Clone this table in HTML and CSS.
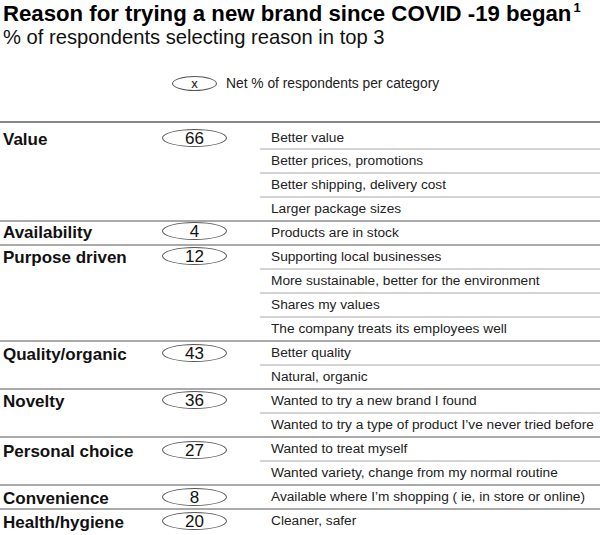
FILE: index.html
```html
<!DOCTYPE html>
<html>
<head>
<meta charset="utf-8">
<link rel="stylesheet" href="styles.css">
</head>
<body>
<div class="page">
  <h1 class="title">Reason for trying a new brand since COVID -19 began<sup>1</sup></h1>
  <div class="subtitle">% of respondents selecting reason in top 3</div>
  <div class="legend">
    <span class="oval oval-small">x</span>
    <span class="legend-text">Net % of respondents per category</span>
  </div>
  <div class="table">
    <div class="cat first">
      <div class="head off6"><div class="label">Value</div><div class="num"><span class="oval">66</span></div></div>
      <div class="items tall-first">
        <div class="item">Better value</div>
        <div class="item">Better prices, promotions</div>
        <div class="item">Better shipping, delivery cost</div>
        <div class="item">Larger package sizes</div>
      </div>
    </div>
    <div class="cat">
      <div class="head off0"><div class="label">Availability</div><div class="num"><span class="oval">4</span></div></div>
      <div class="items">
        <div class="item">Products are in stock</div>
      </div>
    </div>
    <div class="cat">
      <div class="head off1"><div class="label">Purpose driven</div><div class="num"><span class="oval">12</span></div></div>
      <div class="items">
        <div class="item">Supporting local businesses</div>
        <div class="item">More sustainable, better for the environment</div>
        <div class="item">Shares my values</div>
        <div class="item">The company treats its employees well</div>
      </div>
    </div>
    <div class="cat">
      <div class="head off2"><div class="label">Quality/organic</div><div class="num"><span class="oval">43</span></div></div>
      <div class="items">
        <div class="item">Better quality</div>
        <div class="item">Natural, organic</div>
      </div>
    </div>
    <div class="cat">
      <div class="head off1"><div class="label">Novelty</div><div class="num"><span class="oval">36</span></div></div>
      <div class="items">
        <div class="item">Wanted to try a new brand I found</div>
        <div class="item">Wanted to try a type of product I’ve never tried before</div>
      </div>
    </div>
    <div class="cat">
      <div class="head off3"><div class="label">Personal choice</div><div class="num"><span class="oval">27</span></div></div>
      <div class="items">
        <div class="item">Wanted to treat myself</div>
        <div class="item">Wanted variety, change from my normal routine</div>
      </div>
    </div>
    <div class="cat">
      <div class="head off2"><div class="label">Convenience</div><div class="num"><span class="oval">8</span></div></div>
      <div class="items">
        <div class="item">Available where I’m shopping ( ie, in store or online)</div>
      </div>
    </div>
    <div class="cat">
      <div class="head off2"><div class="label">Health/hygiene</div><div class="num"><span class="oval">20</span></div></div>
      <div class="items">
        <div class="item">Cleaner, safer</div>
      </div>
    </div>
  </div>
</div>
</body>
</html>
```
FILE: styles.css
```css
html, body {
  margin: 0;
  padding: 0;
  background: #fff;
}
.page {
  width: 600px;
  height: 535px;
  overflow: hidden;
  font-family: "Liberation Sans", Arial, sans-serif;
  color: #111;
}
.title {
  margin: 0;
  padding: 2px 0 0 3px;
  font-size: 22.2px;
  font-weight: bold;
  line-height: 24px;
  color: #000;
  white-space: nowrap;
}
.title sup {
  font-size: 13px;
  vertical-align: 9px;
  line-height: 0;
  margin-left: 2px;
}
.subtitle {
  padding-left: 3px;
  font-size: 20.2px;
  line-height: 22px;
  color: #111;
  white-space: nowrap;
}
.legend {
  display: flex;
  align-items: center;
  gap: 9px;
  margin-top: 27px;
  padding-left: 172px;
  height: 16px;
}
.legend-text {
  font-size: 13.8px;
  color: #222;
  white-space: nowrap;
}
.oval {
  display: flex;
  align-items: center;
  justify-content: center;
  box-sizing: border-box;
  width: 65px;
  height: 18px;
  border: 1px solid #555;
  border-radius: 50%;
  font-size: 17px;
  line-height: 1;
  color: #111;
}
.oval-small {
  width: 45px;
  height: 15px;
  font-size: 13px;
}
.table {
  margin-top: 30px;
}
.cat {
  display: grid;
  grid-template-columns: 260px 340px;
  border-top: 2px solid #aaa;
}
.cat.first {
  border-top-color: #888;
}
.head {
  display: flex;
  align-items: center;
  align-self: start;
}
.off0 { padding-top: 0; }
.off1 { padding-top: 1px; }
.off2 { padding-top: 2px; }
.off3 { padding-top: 3px; }
.off6 { padding-top: 6px; }
.label {
  width: 157px;
  padding-left: 3px;
  padding-top: 2px;
  margin-bottom: -2px;
  font-size: 17px;
  font-weight: bold;
  line-height: 18px;
  color: #111;
  white-space: nowrap;
}
.num {
  padding-left: 2px;
}
.item {
  height: 22px;
  line-height: 22px;
  padding-left: 11px;
  font-size: 13.7px;
  color: #222;
  white-space: nowrap;
}
.item + .item {
  border-top: 2px solid #d4d4d4;
}
.tall-first .item:first-child {
  padding-top: 4px;
  height: 21px;
  line-height: 21px;
}
```
